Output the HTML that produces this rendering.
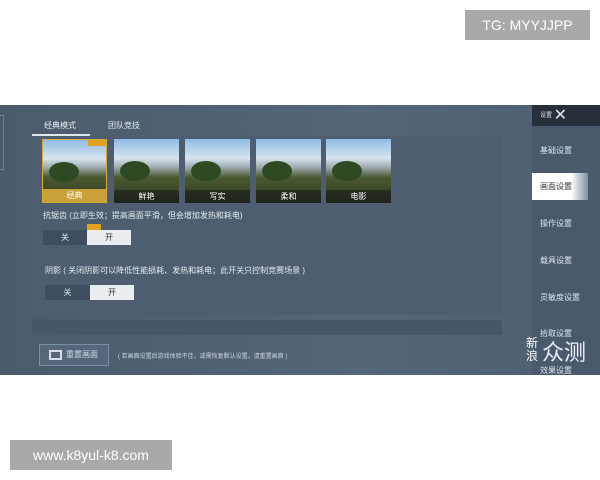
<!DOCTYPE html>
<html><head><meta charset="utf-8"><style>
*{margin:0;padding:0;box-sizing:border-box}
body{width:600px;height:480px;background:#fff;position:relative;overflow:hidden;font-family:"Liberation Sans","Noto Sans CJK SC",sans-serif}
.a{position:absolute}
.scr{left:0;top:105px;width:600px;height:270px;background:linear-gradient(90deg,#4b5b6c,#566679 60%,#4f5f71);}
.cj{color:#e6ebf0;font-size:8px;white-space:nowrap}
.th{position:absolute;top:34px;width:65px;height:64px;background:linear-gradient(180deg,#8fbce4 0%,#d8e4ee 30%,#9aa6aa 45%,#4a5a30 60%,#3d4a2a 80%,#2b3024 100%)}
.th span{position:absolute;bottom:0;left:0;right:0;height:13px;text-align:center;color:#fff;font-size:8px;line-height:13px;background:rgba(20,22,20,.5)}
.tree{position:absolute;left:6px;top:22px;width:30px;height:20px;border-radius:50%;background:#2f4a22}
.side div{position:absolute;left:0;width:68px;font-size:8px;color:#dfe6ee;padding-left:8px}
</style></head><body>
<div class="a" style="left:465px;top:10px;width:125px;height:30px;background:#a9a9a9;color:#fff;font-size:14px;line-height:30px;text-align:center">TG: MYYJJPP</div>
<div class="a" style="left:10px;top:440px;width:162px;height:30px;background:#a9a9a9;color:#fff;font-size:14px;line-height:30px;text-align:center">www.k8yul-k8.com</div>
<div class="a scr">
 <div class="a" style="left:0;top:10px;width:4px;height:55px;border:1px solid #6b8a6a;border-left:none"></div>
 <div class="a cj" style="left:44px;top:15px">经典模式</div>
 <div class="a cj" style="left:108px;top:15px">团队竞技</div>
 <div class="a" style="left:32px;top:29px;width:58px;height:2px;background:#dfe6ee"></div>
 <div class="a" style="left:32px;top:31px;width:470px;height:179px;background:#4e5e70"></div>
 <div class="th" style="left:42px;border:1px solid #d7a93a"><div class="tree"></div><span style="background:#c9a13a">经典</span><div class="a" style="right:0;top:0;width:18px;height:6px;background:#e0a020"></div></div>
 <div class="th" style="left:114px"><div class="tree"></div><span>鲜艳</span></div>
 <div class="th" style="left:185px"><div class="tree"></div><span>写实</span></div>
 <div class="th" style="left:256px"><div class="tree"></div><span>柔和</span></div>
 <div class="th" style="left:326px"><div class="tree"></div><span>电影</span></div>
 <div class="a cj" style="left:43px;top:105px">抗锯齿 (立即生效；提高画面平滑，但会增加发热和耗电)</div>
 <div class="a" style="left:43px;top:125px;width:44px;height:15px;background:#3f4e5e;color:#e6ebf0;font-size:8px;line-height:15px;text-align:center">关</div>
 <div class="a" style="left:87px;top:125px;width:44px;height:15px;background:#e9edf1;color:#333;font-size:8px;line-height:15px;text-align:center">开</div>
 <div class="a" style="left:87px;top:119px;width:14px;height:6px;background:#e0a020"></div>
 <div class="a cj" style="left:45px;top:160px">阴影 ( 关闭阴影可以降低性能损耗、发热和耗电；此开关只控制竞赛场景 )</div>
 <div class="a" style="left:45px;top:180px;width:45px;height:15px;background:#3f4e5e;color:#e6ebf0;font-size:8px;line-height:15px;text-align:center">关</div>
 <div class="a" style="left:90px;top:180px;width:44px;height:15px;background:#e9edf1;color:#333;font-size:8px;line-height:15px;text-align:center">开</div>
 <div class="a" style="left:32px;top:215px;width:470px;height:15px;background:#475767"></div>
 <div class="a" style="left:39px;top:239px;width:70px;height:22px;border:1px solid #7d8fa3;background:#56677b;color:#d6dde6;font-size:8px;line-height:20px;padding-left:26px">重置画面</div>
 <div class="a" style="left:49px;top:245px;width:13px;height:10px;border:2px solid #d6dde6"></div>
 <div class="a cj" style="left:118px;top:246px;font-size:6px;color:#cdd5de">( 若画面设置后游戏体验不佳，或需恢复默认设置，请重置画面 )</div>
 <div class="a side" style="left:532px;top:0;width:68px;height:270px;background:#4a5a6c">
  <div style="top:0;height:21px;background:#27303a;line-height:21px;font-size:6px">设置 <b style="font-size:16px;font-weight:normal;vertical-align:middle">✕</b></div>
  <div style="top:40px">基础设置</div>
  <div style="top:68px;height:27px;width:56px;background:linear-gradient(90deg,#fff 70%,#8090a0);color:#333;line-height:27px">画面设置</div>
  <div style="top:113px">操作设置</div>
  <div style="top:150px">载具设置</div>
  <div style="top:187px">灵敏度设置</div>
  <div style="top:223px">拾取设置</div>
  <div style="top:260px">效果设置</div>
 </div>
 <div class="a" style="left:526px;top:232px;color:#fff;font-size:12px;line-height:13px;width:14px">新浪</div>
 <div class="a" style="left:542px;top:230px;color:#eef;font-size:22px">众测</div>
</div>
</body></html>
